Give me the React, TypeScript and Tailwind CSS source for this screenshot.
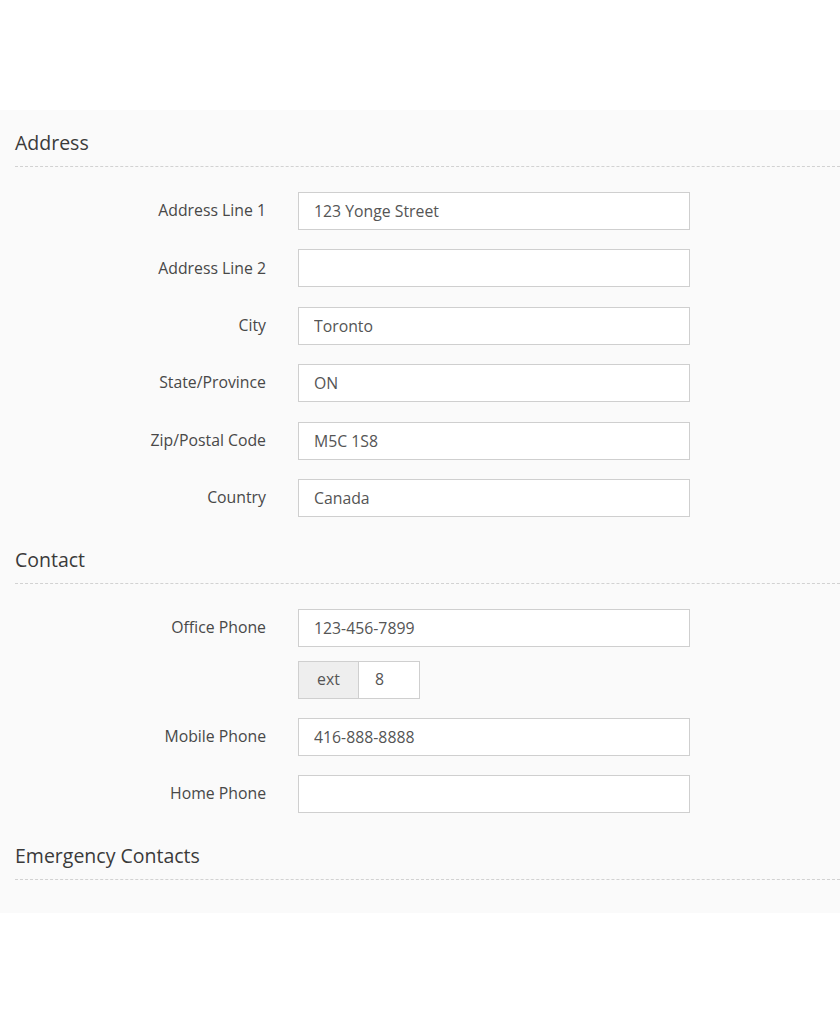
import React from "react";

type Field = { label: string; value: string };

const address: Field[] = [
  { label: "Address Line 1", value: "123 Yonge Street" },
  { label: "Address Line 2", value: "" },
  { label: "City", value: "Toronto" },
  { label: "State/Province", value: "ON" },
  { label: "Zip/Postal Code", value: "M5C 1S8" },
  { label: "Country", value: "Canada" },
];

function SectionHeader({ title, className = "" }: { title: string; className?: string }) {
  return (
    <div className={`border-b border-dashed border-[#d2d2d2] pb-[10px] ${className}`}>
      <h2 className="text-[19.5px] leading-[26px] text-[#3a3a3a] font-normal">{title}</h2>
    </div>
  );
}

function Row({ label, value, className = "" }: Field & { className?: string }) {
  return (
    <div className={`flex items-center ${className}`}>
      <label className="w-[251px] text-right text-[15.8px] text-[#484848]">{label}</label>
      <input
        readOnly
        value={value}
        className="ml-[32px] h-[38px] w-[392px] border border-[#cfcfcf] bg-white px-[15px] text-[15.8px] text-[#555] outline-none"
      />
    </div>
  );
}

export default function App() {
  return (
    <div className="w-[840px] h-[1025px] bg-white overflow-hidden" style={{ fontFamily: '"Open Sans", sans-serif' }}>
      <div className="mt-[110px] bg-[#fafafa] pl-[15px] pt-[20px] pb-[33px]">
        <SectionHeader title="Address" />
        <div className="mt-[25px] flex flex-col gap-[19.4px]">
          {address.map((f) => (
            <Row key={f.label} {...f} />
          ))}
        </div>

        <SectionHeader title="Contact" className="mt-[30px]" />
        <div className="mt-[25px] flex flex-col">
          <Row label="Office Phone" value="123-456-7899" />
          <div className="mt-[14px] ml-[283px] flex h-[38px]">
            <span className="flex w-[61px] items-center justify-center border border-[#cfcfcf] bg-[#eeeeee] text-[15.8px] text-[#555]">
              ext
            </span>
            <input
              readOnly
              value="8"
              className="w-[61px] border border-l-0 border-[#cfcfcf] bg-white px-[16px] text-[15.8px] text-[#555] outline-none"
            />
          </div>
          <Row label="Mobile Phone" value="416-888-8888" className="mt-[19px]" />
          <Row label="Home Phone" value="" className="mt-[19px]" />
        </div>

        <SectionHeader title="Emergency Contacts" className="mt-[30px]" />
      </div>
    </div>
  );
}
